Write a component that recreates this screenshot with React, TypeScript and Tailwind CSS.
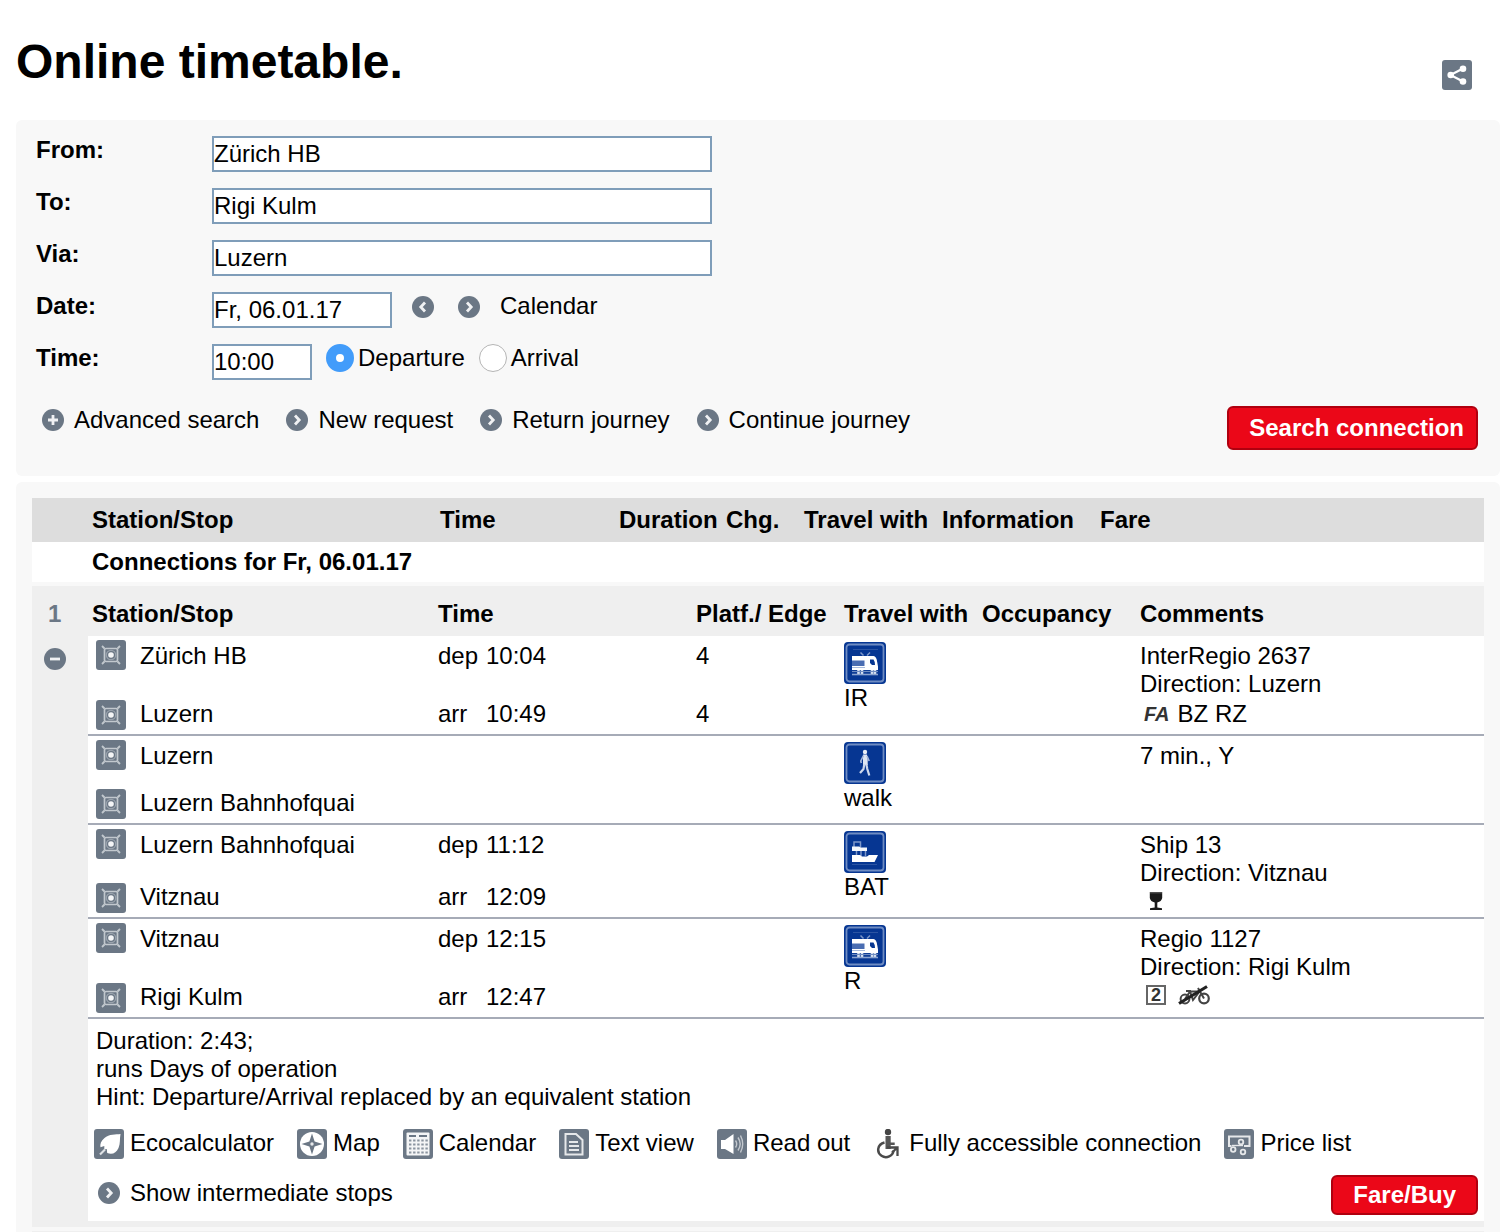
import React from "react";

type IconProps = { className?: string };

function Tile({ children }: { children: React.ReactNode }) {
  return (
    <svg viewBox="0 0 30 30" className="size-[30px] shrink-0" aria-hidden="true">
      <rect width="30" height="30" rx="3" fill="#6b7785" />
      {children}
    </svg>
  );
}

function Circle({ kind }: { kind: "left" | "right" | "plus" | "minus" }) {
  const paths = {
    left: "M13 6.500 8.800 11l4.200 4.500",
    right: "M9 6.500 13.200 11 9 15.500",
    plus: "M11 6v10M6 11h10",
    minus: "M6 11h10",
  };
  return (
    <svg viewBox="0 0 22 22" className="size-[22px] shrink-0" aria-hidden="true">
      <circle cx="11" cy="11" r="11" fill="#6b7785" />
      <path d={paths[kind]} fill="none" stroke="#f0f1f3" strokeWidth="2.800" />
    </svg>
  );
}

function ShareIcon() {
  return (
    <Tile>
      <path d="M21 8.500 8.500 15 21 21.500" fill="none" stroke="#fff" strokeWidth="2.200" />
      <circle cx="21" cy="8.700" r="3.300" fill="#fff" />
      <circle cx="8.700" cy="15" r="3.300" fill="#fff" />
      <circle cx="21" cy="21.500" r="3.300" fill="#fff" />
    </Tile>
  );
}

function StationIcon() {
  return (
    <Tile>
      <g fill="none" stroke="#c2c8ce">
        <rect x="8.500" y="8.500" width="13" height="13" rx="1.500" strokeWidth="1.700" />
        <circle cx="15" cy="15" r="4.700" stroke="#9aa3ad" strokeWidth="1.200" />
        <path d="M6 6l2.500 2.500M24 6l-2.500 2.500M6 24l2.500-2.500M24 24l-2.500-2.500" strokeWidth="1.800" />
      </g>
      <circle cx="15" cy="15" r="2.800" fill="#f4f5f6" />
    </Tile>
  );
}

function LeafIcon() {
  return (
    <Tile>
      <path
        d="M26.500 5C22 5.500 15 5 10.500 9 7 12 5.800 15 6.500 18.300L10.300 17v3.500l2.500-.5.400 4c5 2 9 0 11.300-5C26.500 14.500 25.500 10 26.500 5z"
        fill="#fff"
      />
      <path d="M11 20.500 6 25.500" stroke="#dfe2e5" strokeWidth="2.200" />
    </Tile>
  );
}

function MapIcon() {
  return (
    <Tile>
      <circle cx="15" cy="15" r="12" fill="#fff" />
      <path
        d="M15 4.500l2.600 7.900L25.500 15l-7.900 2.600L15 25.500l-2.600-7.900L4.500 15l7.900-2.600z"
        fill="#6b7785"
      />
      <circle cx="15" cy="15" r="1.700" fill="#e6e8ea" />
    </Tile>
  );
}

function CalendarIcon() {
  return (
    <Tile>
      <rect x="3.500" y="3.500" width="23" height="23" rx="1" fill="#f4f5f6" />
      <path d="M6 7h7M16 7h8" stroke="#6b7785" strokeWidth="2" />
      <path
        d="M6 11.500h19M6 15.500h19M6 19.500h19M6 23.500h19"
        stroke="#8a949f"
        strokeWidth="2.200"
        strokeDasharray="2.400 1.700"
      />
    </Tile>
  );
}

function TextIcon() {
  return (
    <Tile>
      <path
        d="M6.500 5h10.500l6.500 6v14.500h-17z"
        fill="none"
        stroke="#e6e8ea"
        strokeWidth="2"
      />
      <path d="M10 13h9M10 17h10M10 21h10" stroke="#e6e8ea" strokeWidth="1.800" />
    </Tile>
  );
}

function SpeakerIcon() {
  return (
    <Tile>
      <path d="M4 11h4l8.500-6v20L8 20H4z" fill="#fff" />
      <path
        d="M18.500 11.500q2.400 3.500 0 7M21 8.500q4.400 6.500 0 13M23.500 6.500q4.400 8.500 0 17"
        fill="none"
        stroke="#c3c8ce"
        strokeWidth="1.400"
      />
    </Tile>
  );
}

function WheelchairIcon() {
  return (
    <svg viewBox="0 0 30 30" className="size-[30px] shrink-0" aria-hidden="true">
      <circle cx="15" cy="3" r="3.200" fill="#444" />
      <path d="M12.500 7h5.200v6.500h4V16h-4v4h-5.200z" fill="#555" />
      <path
        d="M11.500 13.500c-7.500 2-8 10-3 13.300 5 3.200 11.500.2 12-5.300"
        fill="none"
        stroke="#4a4a4a"
        strokeWidth="2.500"
      />
      <path d="M14 18.500h10.500V27M24.500 18.500l-5.500 5" fill="none" stroke="#4a4a4a" strokeWidth="2.300" />
    </svg>
  );
}

function PriceIcon() {
  return (
    <Tile>
      <path d="M7.500 17H5V7.500h20.500V17H20" fill="none" stroke="#e6e8ea" strokeWidth="2" />
      <g fill="none" stroke="#e6e8ea" strokeWidth="1.800">
        <circle cx="17" cy="13" r="2.300" />
        <circle cx="9.200" cy="20.500" r="2.300" />
        <circle cx="19" cy="23" r="2.300" />
      </g>
      <path d="M8 16.500h11" stroke="#e6e8ea" strokeWidth="1.400" />
    </Tile>
  );
}

function BlueTile({ children }: { children: React.ReactNode }) {
  return (
    <svg viewBox="0 0 42 42" className="block size-[42px]" aria-hidden="true">
      <rect width="42" height="42" rx="4" fill="#063692" />
      <rect x="2.500" y="2.500" width="37" height="37" rx="3" fill="none" stroke="#6f8cc2" strokeWidth="1.800" />
      {children}
    </svg>
  );
}

function TrainIcon() {
  return (
    <BlueTile>
      <path d="M9 7.500h25" stroke="#2b54a3" strokeWidth="1" />
      <path d="M16.500 10.500l3 3M26 10.500l-3 3" stroke="#7d97c9" strokeWidth="1.500" />
      <path d="M8 14h21.500q3 .5 3.700 6l.8 4.500v3.500H8z" fill="#fff" />
      <path d="M8 18.500h12.500v5.500H8z" fill="#4a6db2" />
      <path d="M26 17.500h3.500q1.500 2 1.500 5.500h-3l-2-2z" fill="#063692" />
      <path d="M8 25.500h13" stroke="#a9bbdc" strokeWidth="1" />
      <path d="M14.500 28v4M18 28v4M28 28v4M31 28v4" stroke="#e3eaf5" strokeWidth="2.600" />
      <path d="M8 29.500h26" stroke="#6f8cc2" strokeWidth="1.200" />
      <path d="M8 32.500h26" stroke="#8ba3cf" strokeWidth="1.600" />
    </BlueTile>
  );
}

function WalkIcon() {
  return (
    <BlueTile>
      <circle cx="21" cy="10" r="2.200" fill="#e8edf6" />
      <path d="M19 12.500h4l.7 5v5.500h-4.700v-5z" fill="#dfe6f3" />
      <path d="M19.500 13.500l-2.700 5.500.5 2M23 14l2.200 5" fill="none" stroke="#a4b6da" strokeWidth="1.600" />
      <path d="M20.300 22l-.8 5-3.500 4M22.300 22l1 5 2 6.500" fill="none" stroke="#cfd9ec" strokeWidth="2.200" />
    </BlueTile>
  );
}

function BoatIcon() {
  return (
    <BlueTile>
      <path d="M10 16v-5h6.500v5" fill="none" stroke="#7d97c9" strokeWidth="1.500" />
      <path d="M8 15.500h7l2 1h6v3.500H8z" fill="#f4f7fb" />
      <path d="M12.500 20v5M17 20v5M21.500 20v5" stroke="#7d97c9" strokeWidth="1.500" />
      <path d="M8 24h8l2 1.500h5l2-1.500h9l-3.500 7H8z" fill="#fff" />
      <path d="M8 33.500h25" stroke="#2b54a3" strokeWidth="1" />
    </BlueTile>
  );
}

function GlassIcon({ className }: IconProps) {
  return (
    <svg viewBox="0 0 14 18" className={className} aria-label="Restaurant" role="img">
      <path d="M.8 0h12.400v6Q12.500 9.500 8.300 10.500V15.500l4.700.8V18H1v-1.700l4.700-.8v-5Q1.500 9.500.8 6z" fill="#1a1a1a" />
      <path d="M1 .8h12" stroke="#666" strokeWidth="1" />
    </svg>
  );
}

function NoBikeIcon({ className }: IconProps) {
  return (
    <svg viewBox="0 0 32 20" className={className} aria-label="No bicycles" role="img">
      <g fill="none" stroke="#444">
        <circle cx="7" cy="14" r="4.400" strokeWidth="2" />
        <circle cx="26" cy="13.500" r="4.800" strokeWidth="2.200" />
        <path d="M7 14l5-7.500h9.500l-6.500 8.500-3-8.500M20 3l6 10.500M8 6h5" strokeWidth="2" />
        <path d="M1 18.500 29 1.500" strokeWidth="3.200" stroke="#222" />
      </g>
    </svg>
  );
}

const legs: {
  height: string;
  from: string;
  to: string;
  dep?: string;
  arr?: string;
  platforms?: [string, string];
  icon: React.ReactNode;
  mode: string;
  comments: string[];
  extra?: React.ReactNode;
}[] = [
  {
    height: "h-16",
    from: "Zürich HB",
    to: "Luzern",
    dep: "10:04",
    arr: "10:49",
    platforms: ["4", "4"],
    icon: <TrainIcon />,
    mode: "IR",
    comments: ["InterRegio 2637", "Direction: Luzern"],
    extra: (
      <div className="flex items-center gap-2 pt-0.5 pl-1">
        <span className="text-xl font-bold italic text-[#333]">FA</span>
        <span>BZ RZ</span>
      </div>
    ),
  },
  {
    height: "h-[53px]",
    from: "Luzern",
    to: "Luzern Bahnhofquai",
    icon: <WalkIcon />,
    mode: "walk",
    comments: ["7 min., Y"],
  },
  {
    height: "h-[58px]",
    from: "Luzern Bahnhofquai",
    to: "Vitznau",
    dep: "11:12",
    arr: "12:09",
    icon: <BoatIcon />,
    mode: "BAT",
    comments: ["Ship 13", "Direction: Vitznau"],
    extra: (
      <div className="flex h-7 items-center pl-2">
        <GlassIcon className="h-[18px] w-4" />
      </div>
    ),
  },
  {
    height: "h-16",
    from: "Vitznau",
    to: "Rigi Kulm",
    dep: "12:15",
    arr: "12:47",
    icon: <TrainIcon />,
    mode: "R",
    comments: ["Regio 1127", "Direction: Rigi Kulm"],
    extra: (
      <div className="flex h-7 items-center gap-3 pl-1.5">
        <span className="flex size-5 items-center justify-center border-2 border-[#666] text-lg leading-none font-bold text-[#333]">
          2
        </span>
        <NoBikeIcon className="h-5 w-8" />
      </div>
    ),
  },
];

const tools: { label: string; icon: React.ReactNode }[] = [
  { label: "Ecocalculator", icon: <LeafIcon /> },
  { label: "Map", icon: <MapIcon /> },
  { label: "Calendar", icon: <CalendarIcon /> },
  { label: "Text view", icon: <TextIcon /> },
  { label: "Read out", icon: <SpeakerIcon /> },
  { label: "Fully accessible connection", icon: <WheelchairIcon /> },
  { label: "Price list", icon: <PriceIcon /> },
];

function Stop({ name, first }: { name: string; first?: boolean }) {
  return (
    <div className={first ? "flex gap-3.5 pl-1 leading-8" : "flex gap-3.5 pl-1 leading-7"}>
      <a href="#station" aria-label={`Station ${name}`}>
        <StationIcon />
      </a>
      <a href="#station">{name}</a>
    </div>
  );
}

function StopTime({ kind, time }: { kind: string; time?: string }) {
  if (!time) return null;
  return (
    <div className="flex">
      <span className="w-12">{kind}</span>
      <span>{time}</span>
    </div>
  );
}

function TextField({ id, label, value, width }: { id: string; label: string; value: string; width: string }) {
  return (
    <>
      <label htmlFor={id} className="font-bold">
        {label}
      </label>
      <input id={id} defaultValue={value} className={`h-9 border-2 border-[#7f9db9] bg-white ${width}`} />
    </>
  );
}

function FormLink({ kind, label }: { kind: "plus" | "right"; label: string }) {
  return (
    <a href="#form" className="flex items-center gap-2.5">
      <Circle kind={kind} />
      {label}
    </a>
  );
}

const redButton = "rounded-md border-2 border-[#b0000f] bg-[#eb0718] font-bold text-white";
const line = "border-b-2 border-[#a6abb7]";

export default function App() {
  return (
    <main className="bg-white pt-[34px] pr-2 pl-4 font-['Liberation_Sans',Arial,sans-serif] text-2xl leading-7 text-black">
      <header className="flex items-start justify-between pr-7 pb-[30px]">
        <h1 className="text-5xl leading-[56px] font-bold">Online timetable.</h1>
        <button type="button" aria-label="Share" className="mt-[26px]">
          <ShareIcon />
        </button>
      </header>

      <form className="rounded-md bg-[#f8f8f8] pt-4 pr-[22px] pb-[26px] pl-5" onSubmit={(e) => e.preventDefault()}>
        <div className="grid grid-cols-[176px_1fr] gap-y-4">
          <TextField id="from" label="From:" value="Zürich HB" width="w-[500px]" />
          <TextField id="to" label="To:" value="Rigi Kulm" width="w-[500px]" />
          <TextField id="via" label="Via:" value="Luzern" width="w-[500px]" />

          <label htmlFor="date" className="font-bold">
            Date:
          </label>
          <div className="flex items-start">
            <input id="date" defaultValue="Fr, 06.01.17" className="h-9 w-[180px] border-2 border-[#7f9db9] bg-white" />
            <div className="flex h-7 items-center gap-6 pt-0.5 pl-5">
              <button type="button" aria-label="Previous day">
                <Circle kind="left" />
              </button>
              <button type="button" aria-label="Next day">
                <Circle kind="right" />
              </button>
            </div>
            <a href="#calendar" className="pl-5">
              Calendar
            </a>
          </div>

          <label htmlFor="time" className="font-bold">
            Time:
          </label>
          <div className="flex items-start gap-3.5">
            <input id="time" defaultValue="10:00" className="h-9 w-[100px] border-2 border-[#7f9db9] bg-white" />
            <label className="flex items-center gap-1">
              <input
                type="radio"
                name="mode"
                defaultChecked
                className="size-7 appearance-none rounded-full border border-[#b5b5b5] bg-white checked:border-[10px] checked:border-[#429cfa]"
              />
              Departure
            </label>
            <label className="flex items-center gap-1">
              <input
                type="radio"
                name="mode"
                className="size-7 appearance-none rounded-full border border-[#b5b5b5] bg-white checked:border-[10px] checked:border-[#429cfa]"
              />
              Arrival
            </label>
          </div>
        </div>

        <div className="flex items-start justify-between pt-[26px]">
          <nav className="flex gap-[27px] pl-1.5">
            <FormLink kind="plus" label="Advanced search" />
            <FormLink kind="right" label="New request" />
            <FormLink kind="right" label="Return journey" />
            <FormLink kind="right" label="Continue journey" />
          </nav>
          <button type="submit" className={`h-11 pr-3 pl-5 ${redButton}`}>
            Search connection
          </button>
        </div>
      </form>

      <section className="mt-1.5 rounded-t-md bg-[#f8f8f8] px-4 pt-4">
        <table className="w-full table-fixed border-separate border-spacing-0 bg-white text-left">
          <colgroup>
            <col className="w-14" />
            <col className="w-[348px]" />
            <col className="w-[179px]" />
            <col className="w-[107px]" />
            <col className="w-[78px]" />
            <col className="w-[138px]" />
            <col className="w-[158px]" />
            <col />
          </colgroup>
          <thead>
            <tr className="h-11 bg-[#dddddd]">
              <td />
              <th className="px-1">Station/Stop</th>
              <th className="px-1">Time</th>
              <th className="px-1">Duration</th>
              <th className="px-1">Chg.</th>
              <th className="px-1 whitespace-nowrap">Travel with</th>
              <th className="px-1">Information</th>
              <th className="px-1">Fare</th>
            </tr>
          </thead>
          <tbody>
            <tr className="h-10">
              <td />
              <th colSpan={7} className="px-1">
                Connections for Fr, 06.01.17
              </th>
            </tr>
          </tbody>
        </table>

        <div className="mt-1 bg-[#efefef] pb-1.5">
          <table className="w-full table-fixed border-separate border-spacing-0 text-left">
            <colgroup>
              <col className="w-14" />
              <col className="w-[346px]" />
              <col className="w-[258px]" />
              <col className="w-[148px]" />
              <col className="w-[138px]" />
              <col className="w-[158px]" />
              <col />
            </colgroup>
            <thead>
              <tr className="h-[50px] align-bottom">
                <th className="pr-3 pb-2 pl-4 text-[#6b7785]">1</th>
                <th className="px-1 pb-2">Station/Stop</th>
                <th className="px-1 pb-2">Time</th>
                <th className="px-1 pb-2 whitespace-nowrap">Platf./ Edge</th>
                <th className="px-1 pb-2 whitespace-nowrap">Travel with</th>
                <th className="px-1 pb-2">Occupancy</th>
                <th className="px-1 pb-2">Comments</th>
              </tr>
            </thead>
            <tbody className="bg-white">
              {legs.map((leg, i) => (
                <React.Fragment key={i}>
                  <tr className={`align-top ${leg.height}`}>
                    {i === 0 && (
                      <td rowSpan={9} className="bg-[#efefef] pt-3 pl-3">
                        <button type="button" aria-label="Hide details" className="block">
                          <Circle kind="minus" />
                        </button>
                      </td>
                    )}
                    <td className="px-1 pt-1">
                      <Stop name={leg.from} first />
                    </td>
                    <td className="px-1 pt-1.5">
                      <StopTime kind="dep" time={leg.dep} />
                    </td>
                    <td className="px-1 pt-1.5">{leg.platforms?.[0]}</td>
                    <td rowSpan={2} className={`px-1 pt-1.5 ${line}`}>
                      {leg.icon}
                      {leg.mode}
                    </td>
                    <td rowSpan={2} className={line} />
                    <td rowSpan={2} className={`px-1 pt-1.5 ${line}`}>
                      {leg.comments.map((c) => (
                        <div key={c}>{c}</div>
                      ))}
                      {leg.extra}
                    </td>
                  </tr>
                  <tr className="h-9 align-top">
                    <td className={`px-1 pb-1 ${line}`}>
                      <Stop name={leg.to} />
                    </td>
                    <td className={`px-1 ${line}`}>
                      <StopTime kind="arr" time={leg.arr} />
                    </td>
                    <td className={`px-1 ${line}`}>{leg.platforms?.[1]}</td>
                  </tr>
                </React.Fragment>
              ))}
              <tr>
                <td colSpan={6} className="pt-2 pr-1.5 pb-1.5 pl-1.5">
                  <div className="pl-0.5">
                    <p>Duration: 2:43;</p>
                    <p>
                      runs <a href="#days">Days of operation</a>
                    </p>
                    <p>Hint: Departure/Arrival replaced by an equivalent station</p>
                  </div>
                  <div className="flex flex-wrap gap-x-[23px] pt-[18px]">
                    {tools.map((t) => (
                      <a key={t.label} href="#tool" className="flex gap-1.5">
                        {t.icon}
                        {t.label}
                      </a>
                    ))}
                  </div>
                  <div className="flex items-start justify-between pt-4">
                    <a href="#stops" className="flex items-center gap-2.5 pt-1 pl-1">
                      <Circle kind="right" />
                      Show intermediate stops
                    </a>
                    <button type="button" className={`h-10 px-5 ${redButton}`}>
                      Fare/Buy
                    </button>
                  </div>
                </td>
              </tr>
            </tbody>
          </table>
        </div>
        <div className="mt-1 h-px bg-[#efefef]" />
      </section>
    </main>
  );
}
